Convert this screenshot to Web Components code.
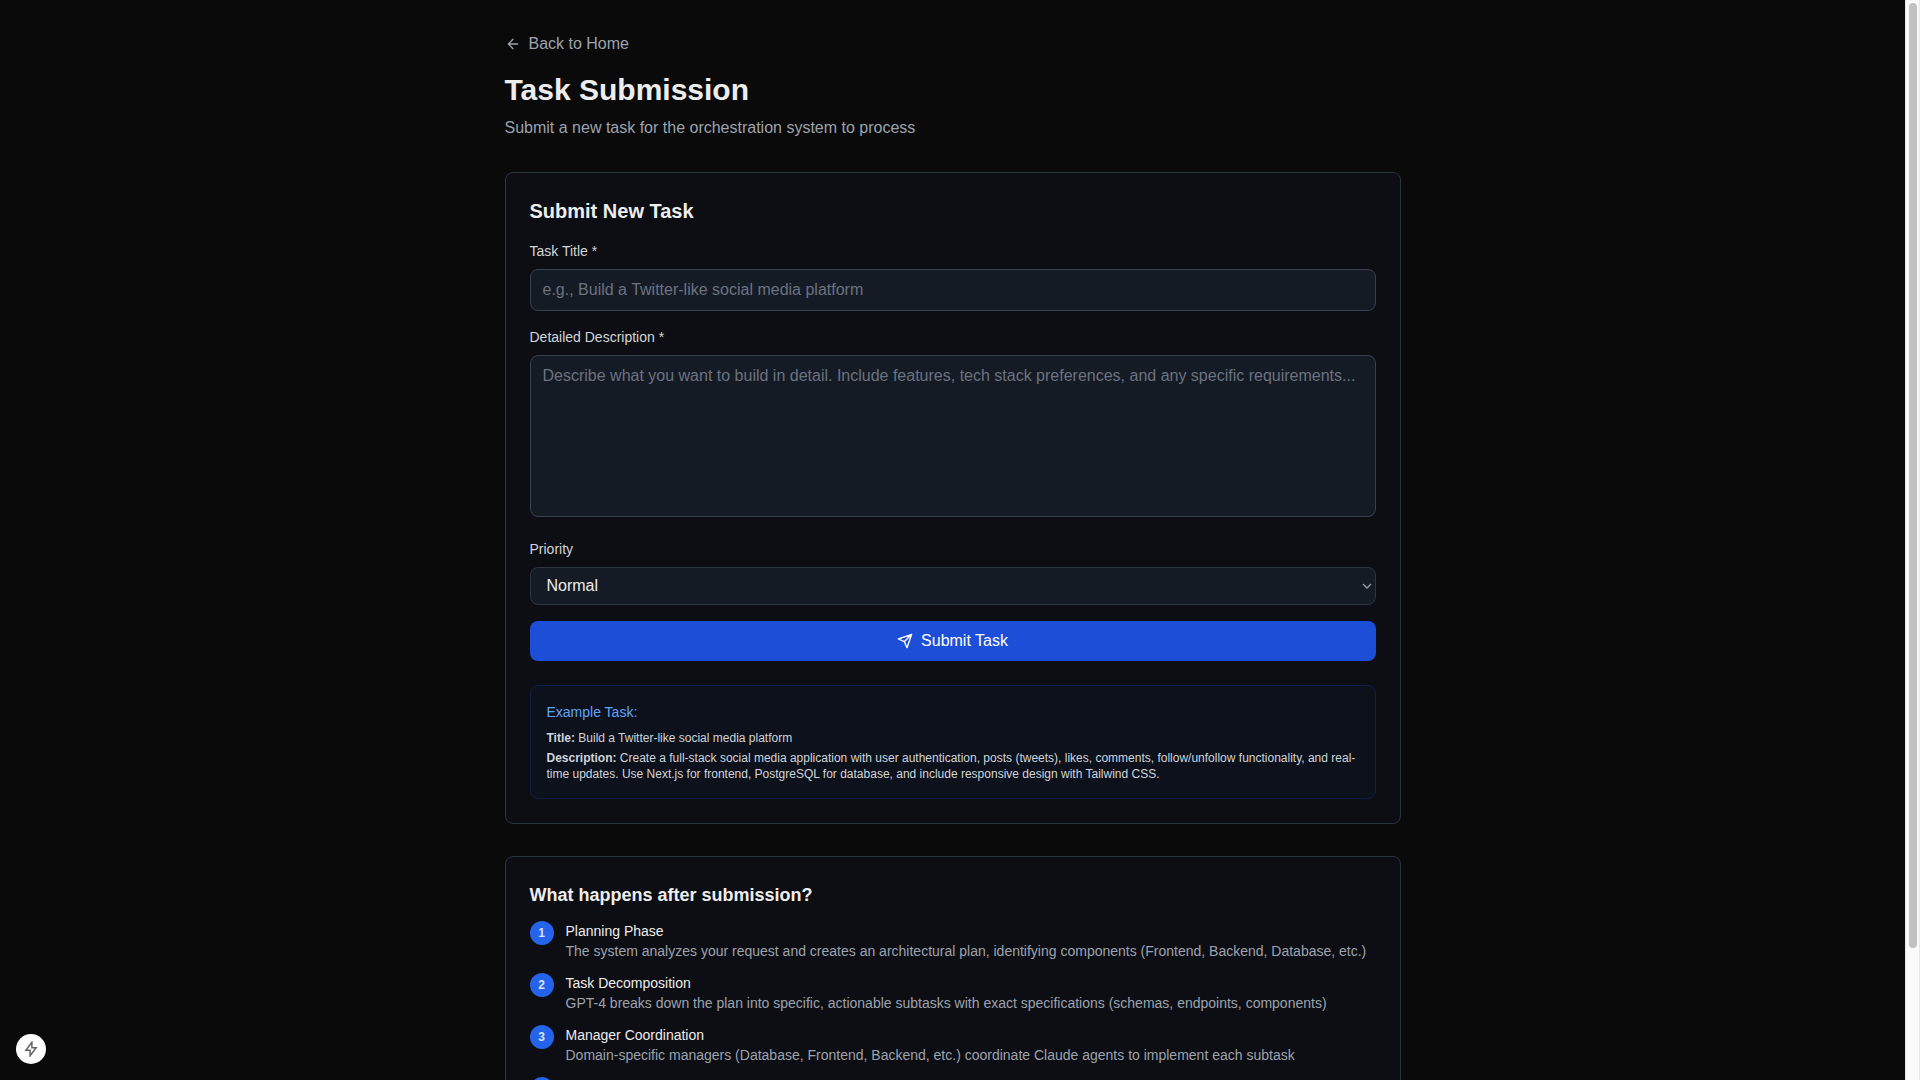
<!DOCTYPE html>
<html lang="en">
<head>
<meta charset="utf-8">
<title>Task Submission</title>
<style>
  body { margin: 0; background: #0a0a0a; color: #ededed; font: 16px/24px "Liberation Sans", Arial, sans-serif; }
</style>
</head>
<body>
<app-shell>
  <page-header href="#home">
    <span slot="back">Back to Home</span>
    <span slot="title">Task Submission</span>
    <span slot="lead">Submit a new task for the orchestration system to process</span>
  </page-header>
  <panel-card>
    <task-form></task-form>
    <example-note></example-note>
  </panel-card>
  <panel-card>
    <step-list>
      <span slot="heading">What happens after submission?</span>
      <step-item number="1" name="Planning Phase">The system analyzes your request and creates an architectural plan, identifying components (Frontend, Backend, Database, etc.)</step-item>
      <step-item number="2" name="Task Decomposition">GPT-4 breaks down the plan into specific, actionable subtasks with exact specifications (schemas, endpoints, components)</step-item>
      <step-item number="3" name="Manager Coordination">Domain-specific managers (Database, Frontend, Backend, etc.) coordinate Claude agents to implement each subtask</step-item>
      <step-item></step-item>
    </step-list>
  </panel-card>
  <dev-badge slot="overlay"></dev-badge>
</app-shell>

<script>
const base = `*, *::before, *::after { box-sizing: border-box; }
  h1, h2, h3, p { margin: 0; }
  :host { display: block; }`;

function define(name, render) {
  customElements.define(name, class extends HTMLElement {
    connectedCallback() {
      if (this.shadowRoot) return;
      const template = document.createElement('template');
      template.innerHTML = render(this);
      this.attachShadow({ mode: 'open' }).append(template.content.cloneNode(true));
    }
  });
}

define('app-shell', () => `<style>${base}
  :host { display: flex; height: 100vh; }
  main { flex: 1; min-width: 0; overflow-y: auto; scrollbar-width: none; }
  .column { max-width: 896px; margin: 0 auto; padding: 32px 0; display: flex; flex-direction: column; gap: 32px; }
  </style>
  <main><div class="column"><slot></slot></div></main>
  <scroll-rail></scroll-rail>
  <slot name="overlay"></slot>`);

define('scroll-rail', () => `<style>${base}
  :host { box-sizing: border-box; flex: none; width: 15px; padding: 3px; background: #fafafa; border: solid #e8e8e8; border-width: 0 1px; }
  div { width: 8px; height: 88%; border-radius: 4px; background: #c1c1c1; }
  </style><div></div>`);

define('page-header', el => `<style>${base}
  a { display: inline-flex; align-items: center; gap: 8px; color: #9ca3af; text-decoration: none; }
  h1 { margin-top: 16px; font-size: 30px; line-height: 36px; font-weight: 700; }
  p { margin-top: 8px; color: #9ca3af; }
  svg { display: block; }
  header { display: flex; flex-direction: column; align-items: flex-start; }
  </style>
  <header>
    <a href="${el.getAttribute('href')}"><svg width="16" height="16" viewBox="0 0 24 24" fill="none" stroke="currentColor" stroke-width="2" stroke-linecap="round" stroke-linejoin="round" aria-hidden="true"><path d="m12 19-7-7 7-7M19 12H5"/></svg><slot name="back"></slot></a>
    <h1><slot name="title"></slot></h1>
    <p><slot name="lead"></slot></p>
  </header>`);

define('panel-card', () => `<style>${base}
  :host { padding: 24px; border: 1px solid #2b3441; border-radius: 8px; background: #0d0e13; }
  </style><slot></slot>`);

define('task-form', () => `<style>${base}
  form { display: flex; flex-direction: column; gap: 16px; }
  h2 { font-size: 20px; line-height: 28px; font-weight: 600; }
  .field { display: flex; flex-direction: column; gap: 8px; }
  .long { padding-bottom: 6px; }
  label { font-size: 14px; line-height: 20px; color: #d1d5db; }
  input, textarea, select { display: block; width: 100%; margin: 0; padding: 8px 12px; border: 1px solid #374151; border-radius: 8px; background: #151b24; color: #ededed; font: inherit; }
  input { height: 42px; }
  textarea { height: 162px; resize: none; }
  .picker { display: grid; align-items: center; }
  .picker > * { grid-area: 1 / 1; }
  .picker svg { justify-self: end; margin-right: 4px; pointer-events: none; }
  select { appearance: none; height: 38px; padding: 0 16px; border-color: #2c3543; }
  ::placeholder { color: #6b7280; opacity: 1; }
  button { display: flex; align-items: center; justify-content: center; gap: 8px; width: 100%; height: 40px; padding: 8px 16px; border: 0; border-radius: 8px; background: #1d4ed8; color: #fff; font: inherit; }
  </style>
  <form>
    <h2>Submit New Task</h2>
    <div class="field"><label for="title">Task Title *</label><input id="title" type="text" placeholder="e.g., Build a Twitter-like social media platform"></div>
    <div class="field long"><label for="details">Detailed Description *</label><textarea id="details" placeholder="Describe what you want to build in detail. Include features, tech stack preferences, and any specific requirements..."></textarea></div>
    <div class="field"><label for="priority">Priority</label><div class="picker"><select id="priority"><option>Low</option><option selected>Normal</option><option>High</option></select><svg width="10" height="6" viewBox="0 0 10 6" fill="none" stroke="#9a9da3" stroke-width="1.3" aria-hidden="true"><path d="M1 1 5 5 9 1"/></svg></div></div>
    <button type="button"><svg width="16" height="16" viewBox="0 0 24 24" fill="none" stroke="currentColor" stroke-width="2" stroke-linecap="round" stroke-linejoin="round" aria-hidden="true"><path d="m22 2-7 20-4-9-9-4ZM22 2 11 13"/></svg>Submit Task</button>
  </form>`);

define('example-note', () => `<style>${base}
  :host { margin-top: 24px; padding: 16px; border: 1px solid #111f48; border-radius: 8px; background: #0c111b; font-size: 12px; line-height: 16px; color: #d1d5db; }
  h3 { margin-bottom: 8px; font-size: 14px; line-height: 20px; font-weight: 400; color: #60a5fa; }
  p + p { margin-top: 4px; }
  </style>
  <h3>Example Task:</h3>
  <p><strong>Title:</strong> Build a Twitter-like social media platform</p>
  <p><strong>Description:</strong> Create a full-stack social media application with user authentication, posts (tweets), likes, comments, follow/unfollow functionality, and real-time updates. Use Next.js for frontend, PostgreSQL for database, and include responsive design with Tailwind CSS.</p>`);

define('step-list', () => `<style>${base}
  h2 { margin-bottom: 12px; font-size: 18px; line-height: 28px; font-weight: 600; }
  .steps { display: flex; flex-direction: column; gap: 12px; }
  </style>
  <h2><slot name="heading"></slot></h2>
  <div class="steps" role="list"><slot></slot></div>`);

define('step-item', el => `<style>${base}
  :host { display: flex; align-items: flex-start; gap: 12px; min-height: 40px; font-size: 14px; line-height: 20px; }
  .number { flex: none; display: flex; align-items: center; justify-content: center; width: 24px; height: 24px; border-radius: 50%; background: #2563eb; color: #dbe4f5; font-size: 12px; line-height: 16px; font-weight: 700; }
  p { color: #9ca3af; }
  h3 { font-size: 14px; line-height: 20px; font-weight: 400; }
  </style>
  <div class="number">${el.getAttribute('number') || ''}</div>
  <div><h3>${el.getAttribute('name') || ''}</h3><p><slot></slot></p></div>`);

define('dev-badge', () => `<style>${base}
  :host { position: fixed; left: 16px; bottom: 16px; }
  button { display: flex; align-items: center; justify-content: center; width: 30px; height: 30px; padding: 0; border: 0; border-radius: 50%; background: #fff; color: #666; }
  </style>
  <button type="button" aria-label="Developer tools"><svg width="16" height="16" viewBox="0 0 16 16" fill="none" stroke="currentColor" stroke-width="1.5" stroke-linejoin="miter" aria-hidden="true"><path d="M8.9 1.2 2.9 9.2H7.1V14.8L13.1 6.8H8.9Z"/></svg></button>`);
</script>
</body>
</html>
